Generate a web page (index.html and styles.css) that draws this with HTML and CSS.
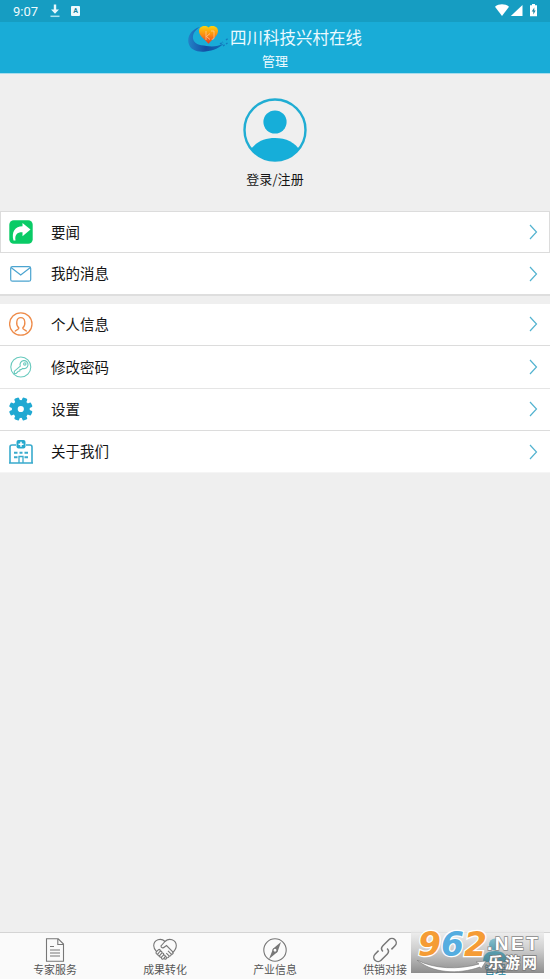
FILE: index.html
```html
<!DOCTYPE html>
<html lang="zh-CN">
<head>
<meta charset="utf-8">
<title>管理</title>
<link rel="stylesheet" href="styles.css">
</head>
<body>
<div class="app">
  <div class="status">
    <span class="time">9:07</span>
    <svg class="dl" width="10" height="14" viewBox="0 0 10 14"><path d="M3.800.5h2.400v5H9L5 9.700 1 5.500h2.800z" fill="#e6f8fc"/><path d="M.5 12.300h9" stroke="#a9e2ee" stroke-width="1.500"/></svg>
    <span class="abox">A</span>
    <span class="fill"></span>
    <svg width="43" height="14" viewBox="0 0 43 14"><path d="M0 2.700C4-.5 10-.5 14 2.700L7 12z" fill="#fff"/><path d="M27.500 1v11H15.800z" fill="#fff"/><path d="M37 0h3v1.200h2V12.300h-7V1.200h2z" fill="#fff"/><path d="M39.300 3.500l-2.600 4h1.600v3l2.400-4h-1.400z" fill="#2688a3"/></svg>
  </div>
  <header class="head">
    <div class="brand">
      <svg width="42" height="28" viewBox="0 0 42 28">
        <defs><linearGradient id="h" x1="0" y1="0" x2="0" y2="1"><stop offset="0" stop-color="#fbd20c"/><stop offset=".45" stop-color="#fb9310"/><stop offset="1" stop-color="#e63a1f"/></linearGradient>
        <linearGradient id="s" x1="0" y1="0" x2="1" y2="0"><stop offset="0" stop-color="#2381c8"/><stop offset=".5" stop-color="#124fa4"/><stop offset="1" stop-color="#126fb8"/></linearGradient></defs>
        <path d="M12 1C4 3-1 10 .5 17c1.500 7 9 9.500 17 8.500 8-.8 15-4 18-8-5 3-11 3.500-17 2.500C11 19 6 18 5 12.500 4.500 8 7 4 12 1z" fill="url(#s)"/>
        <path d="M32 18l3-2M35 20l2-1.500M38 14l2-1.500M38 18l1.500-1" stroke="#1479bd" stroke-width="1.400" stroke-dasharray="2 1"/>
        <path d="M20.500 17.800C18 14 11 10.500 11 5 11-.5 18-1 20.500 1.500c2.500-2.500 9.500-2 9.500 3.500C30 10.500 23 14 20.500 17.800z" fill="url(#h)"/>
        <path d="M18 5v9M22 7.500l-3.500 3 3.500 3M23 5h3v7q0 1.500-2.300 1.300" fill="none" stroke="#ffd0a5" stroke-width=".7"/>
      </svg>
      <span class="name">四川科技兴村在线</span>
    </div>
    <div class="sub">管理</div>
  </header>
  <section class="profile">
    <svg width="64" height="64" viewBox="0 0 64 64"><defs><clipPath id="c"><circle cx="32" cy="32" r="31"/></clipPath></defs><circle cx="32" cy="32" r="30.500" fill="none" stroke="#20add3" stroke-width="2.400"/><circle cx="32" cy="24" r="11.600" fill="#16aed9"/><path d="M6 54C12 44 21 40 32 40S52 44 58 54L48 64H16z" fill="#16aed9" clip-path="url(#c)"/></svg>
    <div class="login">登录/注册</div>
  </section>
  <main>
    <div class="row first">
      <svg class="ic" viewBox="0 0 24 24"><rect x=".3" y=".3" width="23.400" height="23.400" rx="4.500" fill="#09cb66"/><path d="M4.500 20.500C2.200 12 6 6.500 13.500 6.300V3l8 6.500-8 6.700v-4C8.500 12 5.500 14.500 6.500 20.500z" fill="#fff"/></svg>
      <span class="label">要闻</span><svg class="go" viewBox="0 0 9 16"><path d="M1 1l6.500 7L1 15"/></svg></div>
    <div class="row second">
      <svg class="ic" viewBox="0 0 24 24" fill="none" stroke="#4ba4d0" stroke-width="1.200"><rect x="1.700" y="4.700" width="20" height="14.500" rx="1.800"/><path d="M2 5.500l9.700 7.500 9.700-7.500"/></svg>
      <span class="label">我的消息</span><svg class="go" viewBox="0 0 9 16"><path d="M1 1l6.500 7L1 15"/></svg></div>
    <div class="gap"></div>
    <div class="row r3">
      <svg class="ic" viewBox="0 0 24 24" fill="none" stroke="#ee8b49" stroke-width="1.300"><circle cx="11.800" cy="12" r="11.200"/><path d="M6 19.500c.5-2 3.900-1.500 3.900-3.500C6.500 13 7 5.700 11.800 5.700S17 13 13.700 16c0 2 3.500 1.500 4 3.500"/></svg>
      <span class="label">个人信息</span><svg class="go" viewBox="0 0 9 16"><path d="M1 1l6.500 7L1 15"/></svg></div>
    <div class="row r4">
      <svg class="ic" viewBox="0 0 24 24" fill="none" stroke="#67c9bd" stroke-width="1.100"><circle cx="11.800" cy="12" r="10"/><path d="M11.300 11.100a4 4 0 1 1 2.400 2.300l-1.300 1.100-1.400.1-.2 1.500-1.500.2-2.100 2.200-2-.1.200-2.200z"/><circle cx="15.800" cy="8.900" r="1.200"/></svg>
      <span class="label">修改密码</span><svg class="go" viewBox="0 0 9 16"><path d="M1 1l6.500 7L1 15"/></svg></div>
    <div class="row r5">
      <svg class="ic" viewBox="0 0 24 24"><g fill="#20a9d2"><circle cx="11.800" cy="12" r="9"/><rect x="9.300" y=".2" width="5" height="23.600" rx="1.300" transform="rotate(22.500 11.800 12)"/><rect x="9.300" y=".2" width="5" height="23.600" rx="1.300" transform="rotate(67.500 11.800 12)"/><rect x="9.300" y=".2" width="5" height="23.600" rx="1.300" transform="rotate(112.500 11.800 12)"/><rect x="9.300" y=".2" width="5" height="23.600" rx="1.300" transform="rotate(157.500 11.800 12)"/></g><circle cx="11.800" cy="12" r="3.100" fill="#fff"/></svg>
      <span class="label">设置</span><svg class="go" viewBox="0 0 9 16"><path d="M1 1l6.500 7L1 15"/></svg></div>
    <div class="row r6">
      <svg class="ic" viewBox="0 0 24 24"><path d="M7 5H3Q1 5 1 7v15.500M17 5h4q2 0 2 2v15.500M0 23h24" fill="none" stroke="#39abcd" stroke-width="1.600"/><rect x="7.500" width="9" height="8.500" rx="2" fill="#27a9cd"/><path d="M12 1.800v5M9.500 4.300h5" stroke="#fff" stroke-width="1.500"/><path d="M5 12.800h3.500m2 0h3m2 0H19M5 17.300h3.500m7 0H19" stroke="#39abcd" stroke-width="2"/><path d="M10 23v-6.500h4V23" fill="none" stroke="#39abcd" stroke-width="1.300"/></svg>
      <span class="label">关于我们</span><svg class="go" viewBox="0 0 9 16"><path d="M1 1l6.500 7L1 15"/></svg></div>
  </main>
  <nav class="tabs">
    <div class="tab"><svg viewBox="0 0 24 24"><path d="M3.500.8h11.700l5.300 5.300v17.100h-17zM14.800 1v5.500h5.500M7 8.500h4M7 12h10M7 15h10M7 18h10"/></svg><span>专家服务</span></div>
    <div class="tab"><svg viewBox="0 0 24 24"><path d="M12 3.500C8-.5 1 1.500.7 7.500c0 2.500 1 4.300 2.800 6.200M12 3.500c4-4 11-2 11.300 4 0 3-1.800 5.500-4 7.500M12 3.500L8 8c0 2 2 2.500 3.500 1l2-1.500 6.500 6.500c.8 1.500-.8 2.800-2 1.800l-3-3M18 15.800c.8 1.500-.9 2.900-2.200 1.800l-2.500-2.500M15.800 17.600c.8 1.500-1 2.700-2.200 1.700l-2-2M13.600 19.300c.2 1.600-1 2.300-2.200 1.400M3.500 13.700l1.800-1.900c1.200-1 2.500.3 1.700 1.500l-2 2.500c-1.200 1-2.800-.6-1.500-2.100M7 13.500c1.400-1 2.700.5 1.700 1.700l-2 2.300c-1.200.9-2.500-.4-1.700-1.700M8.700 15.300c1.400-.8 2.500.5 1.700 1.700l-1.800 2c-1.200.8-2.500-.3-1.900-1.500M10.500 17.200c1.300-.6 2.200.6 1.500 1.700l-1.500 2c-1.200.8-2.600-.4-1.900-1.900"/></svg><span>成果转化</span></div>
    <div class="tab"><svg viewBox="0 0 24 24"><circle cx="12" cy="12" r="11.200"/><path d="M18 4l-3.500 10-2.500 2-6 5 4-10 2-2z" fill="#777" stroke="none"/><circle cx="12" cy="12.300" r="2" fill="#fafafa"/></svg><span>产业信息</span></div>
    <div class="tab"><svg viewBox="0 0 24 24"><g transform="rotate(-45 12 12)" stroke-width="1.500"><path d="M14.500 12.500c0 2.500-1.500 4-4 4H2a4.300 4.300 0 0 1 0-8.600h5M9.500 11.500c0-2.500 1.500-4 4-4H22a4.300 4.300 0 0 1 0 8.600h-5"/></g></svg><span>供销对接</span></div>
    <div class="tab on"><svg viewBox="0 0 24 24"><circle cx="12" cy="6.500" r="6"/><path d="M0 24q0-11 12-11t12 11z"/></svg><span>管理</span></div>
  </nav>
  <div class="mark">
    <div class="digits"><span>9</span><span class="six">6</span><span>2</span></div>
    <svg class="swoosh" width="70" height="14" viewBox="0 0 70 14"><path d="M0 0c17 9 41 10 62 4l-3-2 10-1-5 8-1-2C41 15 15 13 0 0z" fill="#fff" stroke="#777" stroke-width=".6"/></svg>
    <span class="net">.NET</span>
    <span class="site">乐游网</span>
  </div>
</div>
</body>
</html>
```
FILE: styles.css
```css
* { box-sizing: border-box; }
body { margin: 0; font-family: "Noto Sans CJK SC", sans-serif; color: #151515; }
svg { display: block; flex: none; }
.app { position: relative; display: flex; flex-direction: column; width: 550px; height: 979px; overflow: hidden; background: #efefef; }
.status { display: flex; align-items: center; height: 22px; padding: 0 12px 0 13px; background: #169dc2; color: #eefbfd; }
.time { width: 37px; font: 400 13px/20px Roboto, sans-serif; padding-top: 1px; }
.dl { margin: 0 11px 0 0; }
.abox { width: 9px; height: 10px; background: #edfafd; color: #16829f; border-radius: 1px; font: 700 7px/10px Roboto, sans-serif; text-align: center; }
.fill { flex: 1; }
.head { height: 52px; background: #19acd7; border-bottom: 1px solid #a8dcec; color: #ecfaff; text-align: center; }
.brand { display: flex; height: 30px; padding: 4px 0 0 188px; }
.name { margin-top: -1px; font-size: 16.500px; line-height: 24px; }
.sub { font-size: 13px; line-height: 17px; }
.profile { display: flex; flex-direction: column; align-items: center; height: 137px; padding-top: 24px; }
.login { margin-top: 7px; font-size: 13px; line-height: 20px; letter-spacing: .1px; }
.row { display: flex; align-items: center; padding: 0 12px 0 9px; background: #fff; border-bottom: 1px solid #dcdcdc; font-size: 14.500px; }
.first { height: 42px; padding: 0 11px 0 8px; border: 1px solid #dcdcdc; }
.second { height: 43px; border-bottom: 2px solid #dedede; }
.gap { height: 8px; }
.r3 { height: 42px; padding-bottom: 1px; }
.r4 { height: 43px; border-color: #e5e5e5; }
.r5 { height: 42px; padding-bottom: 1px; }
.r6 { height: 42px; border-color: #f5f5f5; }
.ic { width: 24px; height: 24px; }
.label { flex: 1; margin-left: 18px; line-height: 22px; margin-top: -1px; }
.go { width: 9px; height: 16px; fill: none; stroke: #53b3d0; stroke-width: 1.200; }
.tabs { display: flex; height: 47px; margin-top: auto; background: #fafafa; border-top: 1px solid #d4d4d4; }
.tab { flex: 1; display: flex; flex-direction: column; align-items: center; padding-top: 5px; color: #555; font-size: 10.900px; line-height: 15px; }
.tab svg { width: 24px; height: 24px; overflow: visible; fill: none; stroke: #777; stroke-width: 1.100; }
.tab.on { color: #0f7f9f; }
.tab.on svg { fill: #109fc4; stroke: none; }
.mark { position: absolute; left: 411px; top: 929px; width: 133px; height: 44px; background: linear-gradient(rgba(240,240,240,.7), rgba(165,165,165,.5) 45%, rgba(90,90,90,.68)); }
.digits { position: absolute; left: 7px; top: -4px; display: flex; color: #f59c35; font: italic 700 33px/40px "DejaVu Sans", sans-serif; -webkit-text-stroke: 2.500px #fff; paint-order: stroke fill; }
.digits .six { color: #55ade0; }
.swoosh { position: absolute; left: 6px; top: 31px; }
.net { position: absolute; left: 76px; top: 5px; color: #fff; font: 700 19px/20px "Liberation Sans", sans-serif; letter-spacing: 2.500px; -webkit-text-stroke: 1.500px #888; paint-order: stroke fill; }
.site { position: absolute; left: 77px; top: 23px; color: #fff; font: 700 15px/20px "Noto Sans CJK SC", sans-serif; letter-spacing: 2px; -webkit-text-stroke: 1.500px #777; paint-order: stroke fill; }
```
